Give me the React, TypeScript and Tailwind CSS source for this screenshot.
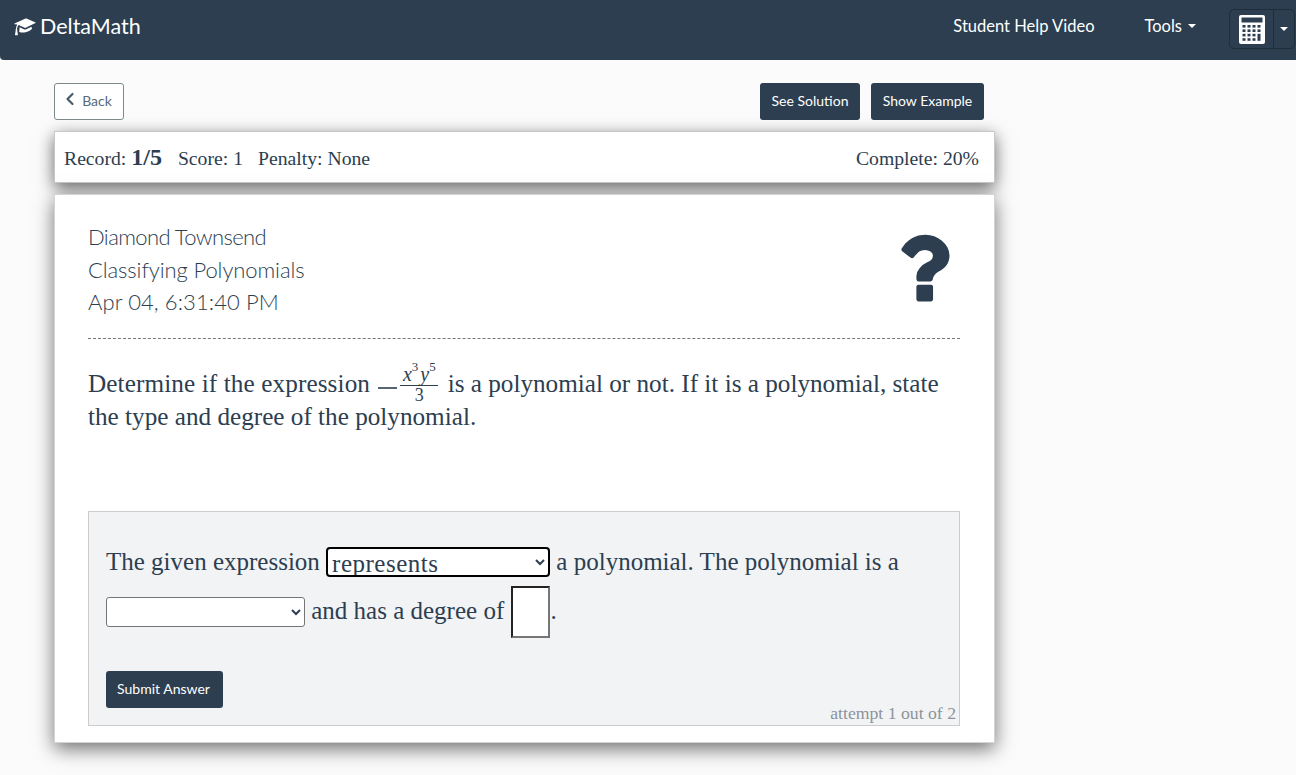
import { ChevronLeft } from "lucide-react";

function CapIcon() {
  return (
    <svg width="22" height="18" viewBox="0 0 22 18" fill="#fff" className="mr-[4px] mt-[1px]">
      <path d="M0.5 5.6 L11.6 0.6 Q12 0.4 12.5 0.6 L21.6 4.4 Q22 4.8 21.5 5.1 L11.6 9.8 Q11.2 10 10.7 9.8 L4.6 7.1 Q3.3 8.6 3 11 Q3.6 11.8 3.2 12.6 L3.9 16.6 Q3.9 17.2 3.3 17.2 L1.4 17.2 Q0.9 17.2 1 16.6 L1.7 12.6 Q1.3 11.6 1.9 11 Q2.2 8.3 3.2 6.4 L0.6 6.3 Q0.2 6 0.5 5.6 Z" />
      <path d="M5.6 9.3 L10.4 11.4 Q11.3 11.7 12.2 11.3 L17.6 8.7 L17.9 10.9 Q15.8 13.2 11.6 14.2 Q8.4 14.9 5.2 14 Z" />
    </svg>
  );
}

function QuestionIcon() {
  return (
    <svg width="62" height="78" viewBox="300 180 1190 1430" fill="#2c3e50" className="mr-[6px] mt-[8px]">
      <path d="M1088 1256v240q0 16-12 28t-28 12h-240q-16 0-28-12t-12-28v-240q0-16 12-28t28-12h240q16 0 28 12t12 28zm316-600q0 54-15.5 101t-35 76.5-55 59.5-57.5 43.5-61 35.5q-41 23-68.5 65t-27.5 67q0 17-12 32.5t-28 15.5h-240q-15 0-25.5-18.5t-10.5-37.5v-45q0-83 65-156.5t143-108.5q59-27 84-56t25-76q0-42-46.5-74t-107.5-32q-65 0-108 29-35 25-107 115-13 16-31 16-12 0-25-8l-164-125q-13-10-15.5-25t5.5-28q160-266 464-266 80 0 161 31t146 83 106 127.5 41 158.5z" />
    </svg>
  );
}

function CalculatorIcon() {
  const keys = [];
  for (let row = 0; row < 4; row++) {
    for (let col = 0; col < 4; col++) {
      if (col === 3 && row > 1) continue;
      keys.push(<rect key={`${row}-${col}`} x={3.5 + col * 5} y={10 + row * 4.4} width="3" height="2.6" fill="#2c3e50" />);
    }
  }
  return (
    <svg width="26" height="29" viewBox="0 0 26 29">
      <rect x="0" y="0" width="26" height="29" rx="2" fill="#fff" />
      <rect x="2.5" y="2.5" width="21" height="5" fill="#2c3e50" />
      {keys}
      <rect x="18.5" y="18.8" width="3" height="7" fill="#2c3e50" />
    </svg>
  );
}

function Caret() {
  return <span className="inline-block border-x-[4px] border-t-[4px] border-x-transparent border-t-white" />;
}

function Navbar() {
  return (
    <nav className="h-[60px] bg-[#2c3e50] rounded-bl-[4px] flex items-center justify-between text-white font-['Lato',sans-serif]">
      <a className="flex items-center pl-[14px] -mt-[7px] text-[21.5px]">
        <CapIcon />
        <span>DeltaMath</span>
      </a>
      <div className="flex items-center text-[16.5px]">
        <span className="-mt-[8px]">Student Help Video</span>
        <span className="ml-[50px] -mt-[8px] flex items-center gap-[6px]">Tools <Caret /></span>
        <div className="ml-[33px] mr-[1px] -mt-[2px] flex h-[40px] border border-[#1f2d3b] rounded-[5px]">
          <div className="w-[44px] flex items-center justify-center border-r border-[#1f2d3b]">
            <CalculatorIcon />
          </div>
          <div className="w-[20px] flex items-center justify-center">
            <Caret />
          </div>
        </div>
      </div>
    </nav>
  );
}

function Fraction() {
  return (
    <span className="inline-flex h-[20px] ml-[2px] mr-[3px] items-center align-middle">
      <span className="inline-block w-[19px] h-[2px] mr-[3px] mt-[3px] bg-[#2c3e50] opacity-80" />
      <span className="inline-flex flex-col items-center w-[38px] leading-none">
        <span className="h-[24px] w-full border-b border-[#2c3e50] flex items-end justify-center pb-[1px] text-[20px] italic">
          <span>x</span>
          <span className="text-[13px] not-italic self-start mt-[-2px] mr-[2px]">3</span>
          <span>y</span>
          <span className="text-[13px] not-italic self-start mt-[-2px]">5</span>
        </span>
        <span className="h-[24px] text-[18px]">3</span>
      </span>
    </span>
  );
}

export default function App() {
  return (
    <div className="min-h-[775px] bg-[#fbfbfb] text-[#2c3e50]">
      <Navbar />
      <main className="w-[941px] ml-[54px] pt-[23px] font-['Liberation_Serif',serif]">
        <div className="flex justify-between pr-[11px] font-['Lato',sans-serif] text-[14px]">
          <button className="h-[37px] w-[70px] flex items-center justify-center gap-[2px] pb-[2px] bg-white border border-[#7b8a8b] rounded-[3px] text-[#5b6b7a]">
            <ChevronLeft className="w-[20px] h-[20px] -ml-[6px] -mt-[3px] text-[#4a5a68]" strokeWidth={2.6} />
            Back
          </button>
          <div className="flex gap-[11px] text-white">
            <button className="h-[37px] w-[100px] pb-[2px] bg-[#2c3e50] rounded-[3px]">See Solution</button>
            <button className="h-[37px] w-[113px] pb-[2px] bg-[#2c3e50] rounded-[3px]">Show Example</button>
          </div>
        </div>

        <div className="mt-[11px] h-[52px] bg-white border border-[#c8c8c8] flex items-baseline justify-between pl-[9px] pr-[15px] pt-[7px] text-[19.7px] shadow-[0_5px_16px_rgba(0,0,0,0.6)]">
          <div className="flex items-baseline">
            <span>Record: <b className="font-bold text-[24px]">1/5</b></span>
            <span className="ml-[16px]">Score: 1</span>
            <span className="ml-[15px]">Penalty: None</span>
          </div>
          <span>Complete: 20%</span>
        </div>

        <section className="mt-[11px] h-[549px] bg-white border border-[#d4d4d4] pl-[33px] pr-[34px] pt-[26px] shadow-[0_6px_18px_rgba(0,0,0,0.55)]">
          <div className="flex justify-between border-b border-dashed border-[#777] h-[118px]">
            <div className="font-['Lato',sans-serif] font-light text-[22px] leading-[32.5px] text-[#2c3e50]">
              <div className="tracking-[-0.6px]">Diamond Townsend</div>
              <div className="tracking-[-0.1px]">Classifying Polynomials</div>
              <div className="tracking-[0.1px]">Apr 04, 6:31:40 PM</div>
            </div>
            <QuestionIcon />
          </div>

          <p className="mt-[28px] text-[25.2px] leading-[33px]">
            <span className="tracking-[0.11px]">Determine if the expression</span> <Fraction /> is a polynomial or not. If it is a polynomial, state the type and degree of the polynomial.
          </p>

          <div className="mt-[78px] h-[215px] bg-[#f2f3f5] border border-[#cccccc] px-[17px] pt-[25px] relative">
            <div className="text-[25px] leading-[49px]">
              The given expression{" "}
              <select defaultValue="represents" className="w-[224px] h-[30px] align-[-2px] bg-white border-2 border-black rounded-[4px] text-[25px] tracking-[0.5px] font-['Liberation_Serif',serif] text-[#2c3e50]">
                <option>represents</option>
                <option>does not represent</option>
              </select>{" "}
              a polynomial. The polynomial is a
              <br />
              <select defaultValue="" className="w-[199px] h-[30px] align-[0px] bg-white border border-[#767676] rounded-[3px] text-[20px]">
                <option value=""></option>
              </select>{" "}
              and has a degree of{" "}
              <input className="w-[39px] h-[52px] ml-[1px] align-[-1px] bg-white border-2 border-t-[#222] border-l-[#222] border-r-[#767676] border-b-[#767676]" />
              .
            </div>
            <button className="mt-[33px] h-[37px] w-[117px] pb-[2px] pr-[2px] bg-[#2c3e50] rounded-[3px] text-white font-['Lato',sans-serif] text-[14px]">Submit Answer</button>
            <span className="absolute right-[3px] bottom-[2px] text-[17.7px] leading-[20px] text-[#8b939b]">attempt 1 out of 2</span>
          </div>
        </section>
      </main>
    </div>
  );
}
